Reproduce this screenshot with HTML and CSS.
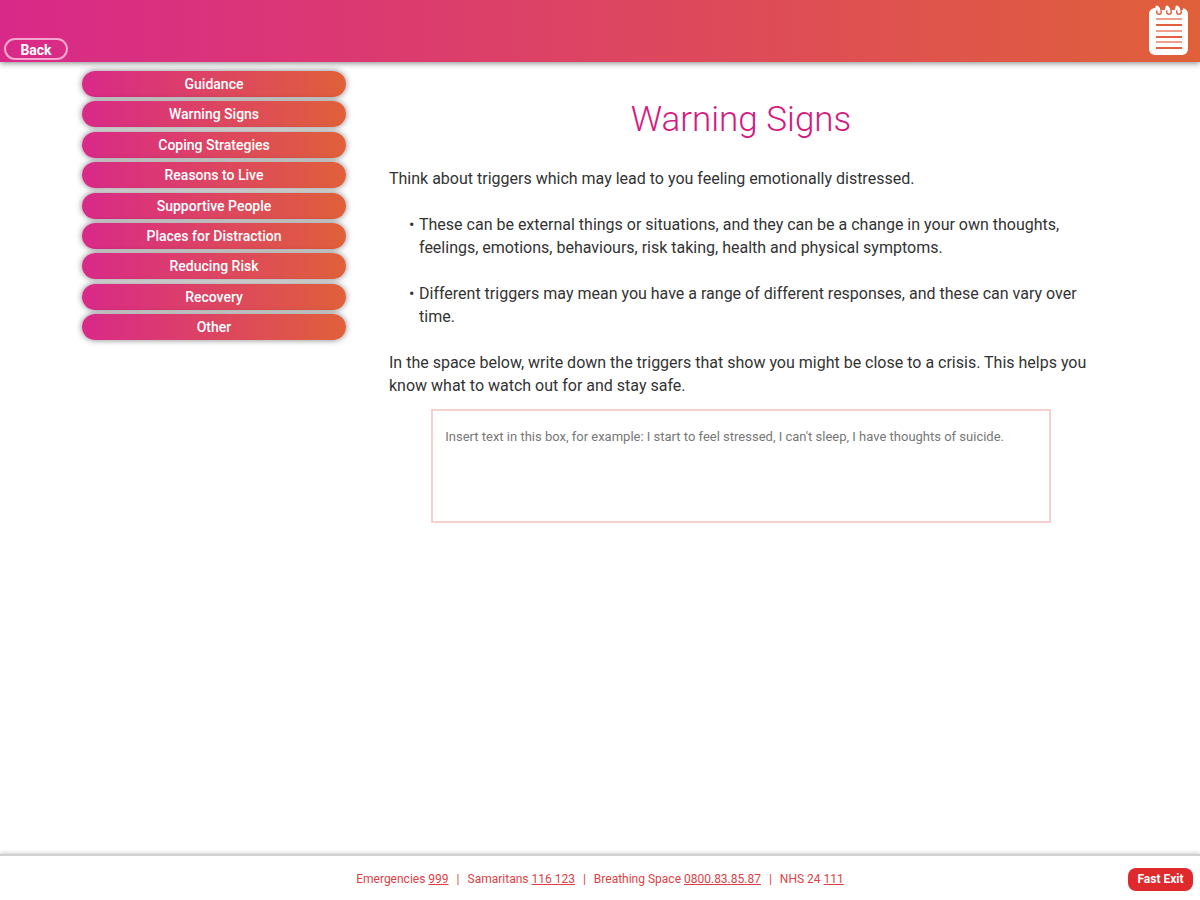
FILE: index.html
```html
<!DOCTYPE html>
<html lang="en">
<head>
    <meta charset="UTF-8">
    <meta name="viewport" content="width=device-width, initial-scale=1.0">
    <title>Warning Signs</title>
    <link rel="stylesheet" href="styles.css">
</head>
<body>
    <header class="top-bar">
        <button type="button" class="back-btn">Back</button>
        <svg class="notepad" viewBox="0 0 40 50" aria-hidden="true">
            <rect x="0" y="3" width="39" height="47" rx="6" fill="#fff"/>
            <g fill="#e0603f">
                <circle cx="10" cy="7" r="3"/>
                <circle cx="20" cy="7" r="3"/>
                <circle cx="30" cy="7" r="3"/>
                <path d="M11 2h5v3h-5zM21 2h5v3h-5zM31 2h3v3h-3z"/>
            </g>
            <g fill="none" stroke="#fff" stroke-width="3" stroke-linecap="round">
                <path d="M8 2c2 1 2 3 2 5M18 2c2 1 2 3 2 5M28 2c2 1 2 3 2 5"/>
            </g>
            <g stroke="#e0603f" stroke-width="2">
                <path d="M7 20h26M7 32h26M7 43h26"/>
                <path d="M7 14h26M7 26h26M7 37h26" opacity=".6"/>
            </g>
        </svg>
    </header>

    <div class="layout">
        <nav class="side-nav">
            <a href="#guidance">Guidance</a>
            <a href="#warning-signs">Warning Signs</a>
            <a href="#coping">Coping Strategies</a>
            <a href="#reasons">Reasons to Live</a>
            <a href="#people">Supportive People</a>
            <a href="#places">Places for Distraction</a>
            <a href="#risk">Reducing Risk</a>
            <a href="#recovery">Recovery</a>
            <a href="#other">Other</a>
        </nav>

        <main class="content">
            <h1>Warning Signs</h1>
            <p>Think about triggers which may lead to you feeling emotionally distressed.</p>
            <ul>
                <li>These can be external things or situations, and they can be a change in your own thoughts, feelings, emotions, behaviours, risk taking, health and physical symptoms.</li>
                <li>Different triggers may mean you have a range of different responses, and these can vary over time.</li>
            </ul>
            <label for="signs">In the space below, write down the triggers that show you might be close to a crisis. This helps you know what to watch out for and stay safe.</label>
            <textarea id="signs" placeholder="Insert text in this box, for example: I start to feel stressed, I can't sleep, I have thoughts of suicide."></textarea>
        </main>
    </div>

    <footer class="bottom-bar">
        <p class="helplines">
            <span>Emergencies <a href="tel:999">999</a></span>
            <span>|</span>
            <span>Samaritans <a href="tel:116123">116 123</a></span>
            <span>|</span>
            <span>Breathing Space <a href="tel:0800838587">0800.83.85.87</a></span>
            <span>|</span>
            <span>NHS 24 <a href="tel:111">111</a></span>
        </p>
        <button type="button" class="exit-btn">Fast Exit</button>
    </footer>
</body>
</html>
```
FILE: styles.css
```css
* {
    box-sizing: border-box;
}

body {
    margin: 0;
    min-height: 100vh;
    display: flex;
    flex-direction: column;
    font-family: Roboto, "Liberation Sans", sans-serif;
    font-size: 16px;
    line-height: 23px;
    color: #333;
    background: #fff;
}

.top-bar {
    display: flex;
    justify-content: space-between;
    align-items: flex-end;
    height: 62px;
    padding: 0 11px 2px 4px;
    background: linear-gradient(to right, #d92989, #e0603a);
    box-shadow: 0 1px 6px rgba(0, 0, 0, 0.5);
}

.back-btn {
    width: 64px;
    height: 22px;
    padding: 1px 0 0;
    border: 2px solid #f3a6cf;
    border-radius: 11px;
    background: transparent;
    color: #fff;
    font: 700 14px/18px Roboto, sans-serif;
    cursor: pointer;
}

.notepad {
    width: 40px;
    height: 50px;
    margin-bottom: 5px;
}

.layout {
    flex: 1;
    display: grid;
    grid-template-columns: 3fr 8fr;
    gap: 43px;
    align-items: start;
    padding: 9px 107px 20px 82px;
}

.side-nav {
    display: grid;
    align-content: space-between;
    min-height: 269px;
}

.side-nav a {
    height: 26px;
    border-radius: 13px;
    background: linear-gradient(to right, #d92989, #e0603a);
    box-shadow: 0 0 6px rgba(0, 0, 0, 0.5);
    color: #fff;
    font-size: 14px;
    font-weight: 500;
    line-height: 26px;
    text-align: center;
    text-decoration: none;
}

.content h1 {
    margin: 27px 0 25px;
    color: #d6197f;
    font-size: 35px;
    font-weight: 300;
    line-height: 44px;
    text-align: center;
}

.content p,
.content ul {
    margin: 0 0 23px;
}

.content ul {
    padding: 0;
    list-style: none;
}

.content li {
    display: flex;
    padding-left: 20px;
}

.content li::before {
    content: "•";
    flex: 0 0 10px;
}

.content li + li {
    margin-top: 23px;
}

.content label {
    display: block;
}

.content textarea {
    display: block;
    width: 88%;
    height: 114px;
    margin: 12px auto 0;
    padding: 16px 12px;
    border: 2px solid #f6cfcf;
    resize: none;
    font: 13px/20px Roboto, sans-serif;
    color: #333;
}

.content textarea::placeholder {
    color: #777;
}

.bottom-bar {
    display: grid;
    grid-template-columns: 1fr auto 1fr;
    align-items: center;
    height: 46px;
    padding: 2px 7px 0;
    border-top: 2px solid #d0d0d0;
    box-shadow: 0 -1px 4px rgba(0, 0, 0, 0.2);
}

.helplines {
    grid-column: 2;
    display: flex;
    gap: 8px;
    margin: 0;
    color: #dc3f46;
    font-size: 12px;
    line-height: 20px;
}

.helplines a {
    color: inherit;
}

.exit-btn {
    justify-self: end;
    width: 65px;
    height: 23px;
    padding: 0;
    border: none;
    border-radius: 8px;
    background: #de2a2d;
    color: #fff;
    font: 700 12px/23px Roboto, sans-serif;
    cursor: pointer;
}
```
